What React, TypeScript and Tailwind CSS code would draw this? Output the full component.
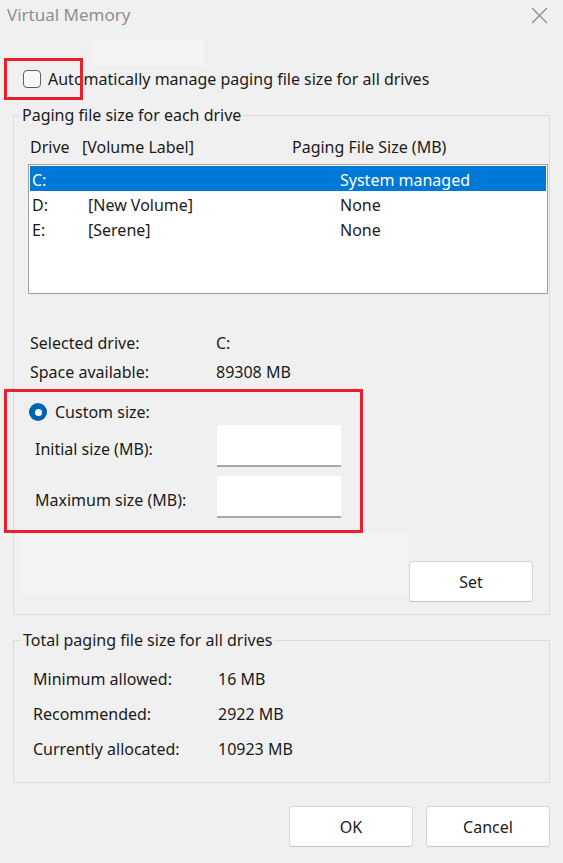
import React from "react";

const drives = [
  { letter: "C:", label: "", size: "System managed", selected: true },
  { letter: "D:", label: "[New Volume]", size: "None", selected: false },
  { letter: "E:", label: "[Serene]", size: "None", selected: false },
];

const totals = [
  { label: "Minimum allowed:", value: "16 MB" },
  { label: "Recommended:", value: "2922 MB" },
  { label: "Currently allocated:", value: "10923 MB" },
];

const Button = ({ children, className }: { children: React.ReactNode; className?: string }) => (
  <button
    className={
      "h-[41px] w-[124px] rounded-[4px] border border-[#d6d6d6] border-b-[#c4c4c4] bg-white text-[16px] text-[#1b1b1b] " +
      (className ?? "")
    }
  >
    {children}
  </button>
);

const SizeInput = () => (
  <div className="h-[42px] w-[124px] rounded-t-[2px] border-b-2 border-[#a8a8a8] bg-white" />
);

export default function App() {
  return (
    <div
      className="relative h-[863px] w-[563px] overflow-hidden bg-[#f0f0f0] text-[16px] text-[#1b1b1b]"
      style={{ fontFamily: '"Noto Sans", "Open Sans", sans-serif' }}
    >
      {/* title bar */}
      <div className="flex h-[30px] items-center justify-between pl-[7px] pr-[15px]">
        <span className="text-[17px] text-[#8f8f8f]">Virtual Memory</span>
        <svg width="17" height="17" viewBox="0 0 16 16" fill="none" stroke="#8c8c8c" strokeWidth="1.2">
          <path d="M1 1L15 15M15 1L1 15" />
        </svg>
      </div>

      {/* leftover patch near top */}
      <div className="ml-[92px] mt-[10px] h-[25px] w-[113px] bg-[#f4f4f4]" />

      {/* auto-manage checkbox */}
      <div className="mt-[2px] flex h-[24px] items-center pl-[23px]">
        <span className="h-[18px] w-[18px] rounded-[4px] border border-[#5f5f5f] bg-[#f7f7f7]" />
        <span className="ml-[7px]">Automatically manage paging file size for all drives</span>
      </div>

      {/* paging file size for each drive */}
      <fieldset className="mx-[13px] mt-[13px] h-[511px] border border-[#dcdcdc] pr-px">
        <legend className="ml-[6px] px-[2px] leading-[22px]">Paging file size for each drive</legend>

        <div className="mt-[10px] flex h-[22px] items-center pl-[16px]">
          <span className="w-[52px]">Drive</span>
          <span className="w-[210px]">[Volume Label]</span>
          <span>Paging File Size (MB)</span>
        </div>

        <div className="ml-[14px] mt-[6px] h-[130px] border border-[#a0a0a0] bg-white p-px">
          {drives.map((d) => (
            <div
              key={d.letter}
              className={
                "flex h-[25px] items-center pl-[2px] pt-[3px] " +
                (d.selected ? "bg-[#0078d7] text-white" : "")
              }
            >
              <span className="w-[56px]">{d.letter}</span>
              <span className="w-[252px]">{d.label}</span>
              <span>{d.size}</span>
            </div>
          ))}
        </div>

        <div className="mt-[38px] flex h-[22px] items-center pl-[16px]">
          <span className="w-[186px]">Selected drive:</span>
          <span>C:</span>
        </div>
        <div className="mt-[7px] flex h-[22px] items-center pl-[16px]">
          <span className="w-[186px]">Space available:</span>
          <span>89308 MB</span>
        </div>

        <div className="mt-[18px] flex h-[22px] items-center pl-[15px]">
          <span className="flex h-[18px] w-[18px] items-center justify-center rounded-full bg-[#0063b1]">
            <span className="h-[7px] w-[7px] rounded-full bg-white" />
          </span>
          <span className="ml-[8px]">Custom size:</span>
        </div>

        <div className="mt-[2px] flex flex-col gap-[9px] pl-[21px]">
          <div className="flex items-center">
            <span className="w-[182px] pt-[5px]">Initial size (MB):</span>
            <SizeInput />
          </div>
          <div className="flex items-center">
            <span className="w-[182px] pt-[5px]">Maximum size (MB):</span>
            <SizeInput />
          </div>
        </div>

        <div className="mt-[16px] flex items-end pl-[6px]">
          <div className="h-[60px] w-[388px] bg-[#f4f4f4]" />
          <Button className="mb-[-8px] ml-px">Set</Button>
        </div>
      </fieldset>

      {/* totals */}
      <fieldset className="mx-[13px] mt-[14px] h-[154px] border border-[#dcdcdc]">
        <legend className="ml-[7px] px-[2px] leading-[22px]">Total paging file size for all drives</legend>
        <div className="mt-[17px] flex flex-col gap-[13px] pl-[19px]">
          {totals.map((t) => (
            <div key={t.label} className="flex h-[22px] items-center">
              <span className="w-[185px]">{t.label}</span>
              <span>{t.value}</span>
            </div>
          ))}
        </div>
      </fieldset>

      <div className="mt-[23px] flex justify-end gap-[13px] pr-[13px]">
        <Button className="w-[123px]">OK</Button>
        <Button>Cancel</Button>
      </div>

      {/* red annotation boxes */}
      <div className="pointer-events-none absolute left-[4px] top-[58px] h-[42px] w-[79px] border-[3px] border-[#e8222b]" />
      <div className="pointer-events-none absolute left-[4px] top-[389px] h-[144px] w-[359px] border-[3px] border-[#e8222b]" />
    </div>
  );
}
